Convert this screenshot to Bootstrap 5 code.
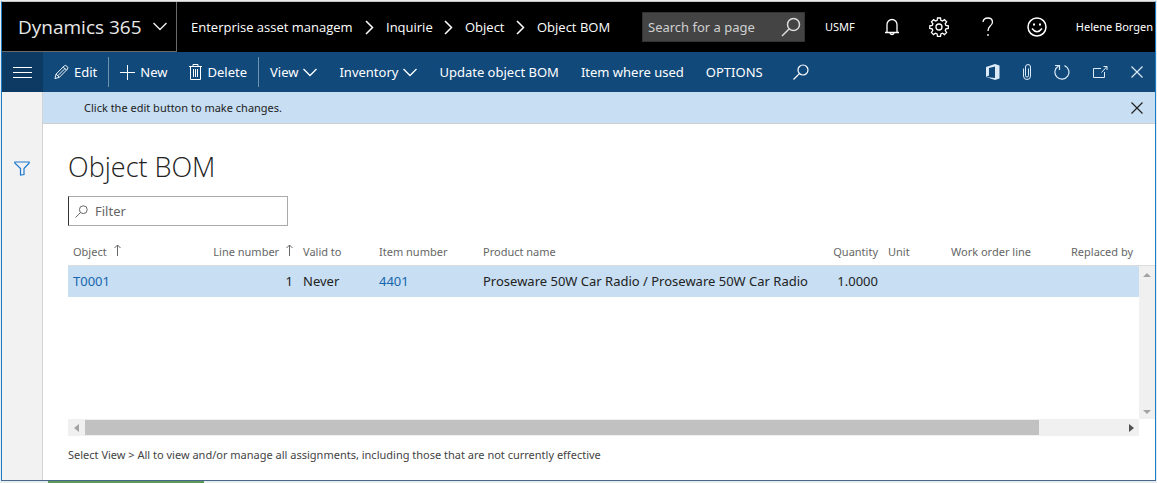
<!DOCTYPE html>
<html lang="en">
<head>
<meta charset="utf-8">
<meta name="viewport" content="width=device-width, initial-scale=1">
<title>Object BOM - Dynamics 365</title>
<link href="https://cdn.jsdelivr.net/npm/bootstrap@5.3.0/dist/css/bootstrap.min.css" rel="stylesheet">
<style>
  body { font-family: "Noto Sans", "Open Sans", sans-serif; font-size: 13px; line-height: 20px; color: #222; background: #e9ecef; }
  svg { display: block; fill: none; stroke: currentColor; flex: none; }
  .solid { stroke: none; fill: currentColor; }
  button { background: none; border: 0; padding: 0; color: inherit; }
  .app-window { border: 1px solid #1b7cc8; border-top-color: #c4c4c4; border-bottom-color: #47688a; margin: 1px 1px 0; background: #fff; }
  .behind { height: 2px; padding-left: 48px; }
  .behind-mark { width: 156px; background: #5d9a5a; }
  .top-bar { height: 50px; background: #000; color: #fff; }
  .brand-btn { width: 175px; padding-left: 16px; gap: 11px; font-size: 19px; border: 1px solid #6a6a6a; border-width: 0 1px 1px 0; color: #e8e8e8; font-family: "Open Sans", sans-serif; }
  .crumbs { padding-left: 14px; gap: 12px; font-family: "Open Sans", sans-serif; }
  .crumbs a, .plain-link { color: inherit; text-decoration: none; white-space: nowrap; }
  .crumb-l { width: 162px; } .crumb-m { width: 46px; } .crumb-s { width: 39px; } .crumb-e { width: 75px; }
  .page-search { width: 163px; height: 30px; background: #444; border: 1px solid #333; margin-left: 30px; padding: 0 3px 0 5px; color: #ddd; }
  .page-search input { background: none; border: 0; outline: 0; color: #fff; min-width: 0; padding: 0; }
  .page-search input::placeholder { color: #d0d0d0; opacity: 1; }
  .fine { font-size: 11px; }
  .tools { gap: 29px; padding-left: 20px; }
  .action-bar { height: 40px; background: #11497b; color: #fff; }
  .menu-btn { width: 41px; background: #0d3a63; }
  .divide { width: 1px; height: 30px; background: #6f92b0; }
  .bar-items button { display: flex; align-items: center; gap: 5px; padding: 0 11px; white-space: nowrap; }
  .bar-tools { gap: 23px; padding-right: 12px; color: #dcebf7; }
  .side-rail { width: 41px; background: #f2f2f2; border-right: 1px solid #d2d2d2; padding-top: 69px; color: #1e7bd0; }
  .notice { height: 32px; background: #c7def3; border-bottom: 1px solid #d0d0d0; padding: 0 12px 0 41px; }
  .work { padding: 23px 0 16px 25px; }
  .work h1 { font-family: "Open Sans", sans-serif; font-size: 27px; line-height: 40px; font-weight: 300; margin: 0 0 9px; }
  .filter-box { width: 220px; height: 30px; border: 1px solid #aaa; border-left-color: #333; padding: 0 6px; gap: 7px; color: #666; }
  .filter-box input { border: 0; outline: 0; padding: 0; min-width: 0; }
  .filter-box input::placeholder { color: #666; opacity: 1; }
  .grid-top { margin-top: 14px; }
  .bom { table-layout: fixed; width: 100%; min-width: 1000px; }
  .bom th { font-weight: 400; font-size: 11px; color: #666; padding: 0 5px; height: 25px; white-space: nowrap; }
  .bom td { background: #c7def3; border-top: 1px solid #dcdcdc; height: 32px; padding: 0 5px; white-space: nowrap; }
  .bom a { color: #1766ad; text-decoration: none; }
  .c-obj { width: 92px; } .c-line { width: 138px; } .c-valid { width: 76px; } .c-item { width: 104px; }
  .c-qty { width: 60px; } .c-unit { width: 63px; } .c-work { width: 120px; } .c-rep { width: 73px; }
  .v-track { width: 16px; margin-top: 25px; background: #f0f0f0; border-top: 1px solid #dcdcdc; padding: 7px 0 5px; color: #a3a3a3; }
  .h-track { height: 17px; margin-right: 16px; background: #f0f0f0; padding: 1px 5px 1px 6px; color: #a3a3a3; }
  .h-thumb { background: #c1c1c1; width: 90%; margin-left: 6px; }
  .dark-arrow { color: #505050; }
  .hint { margin: 10px 0 0; font-size: 11px; line-height: 18px; color: #444; }
</style>
</head>
<body>
<div class="d-flex flex-column vh-100">
<div class="app-window d-flex flex-column flex-grow-1">
  <header class="top-bar d-flex align-items-stretch">
    <button class="brand-btn d-flex align-items-center flex-shrink-0">Dynamics 365
      <svg width="14" height="9" viewBox="0 0 14 9" stroke-width="1.500"><path d="M.5 1L7 7.500 13.500 1"/></svg></button>
    <nav class="crumbs d-flex align-items-center flex-shrink-0" aria-label="Breadcrumb">
      <a href="#" class="crumb-l">Enterprise asset managem</a>
      <svg width="9" height="15" viewBox="0 0 9 15" stroke-width="1.500"><path d="M1 1l6.500 6.500L1 14"/></svg>
      <a href="#" class="crumb-m">Inquirie</a>
      <svg width="9" height="15" viewBox="0 0 9 15" stroke-width="1.500"><path d="M1 1l6.500 6.500L1 14"/></svg>
      <a href="#" class="crumb-s">Object</a>
      <svg width="9" height="15" viewBox="0 0 9 15" stroke-width="1.500"><path d="M1 1l6.500 6.500L1 14"/></svg>
      <a href="#" class="crumb-e">Object BOM</a>
    </nav>
    <div class="page-search d-flex align-items-center align-self-center flex-shrink-0">
      <input class="flex-grow-1" type="text" placeholder="Search for a page" aria-label="Search for a page">
      <svg width="20" height="20" viewBox="0 0 20 20" stroke-width="1.500"><circle cx="12.500" cy="7.500" r="6"/><path d="M8.300 11.700L1 19"/></svg>
    </div>
    <div class="tools d-flex align-items-center flex-grow-1">
      <span class="fine">USMF</span>
      <button aria-label="Notifications"><svg width="16" height="18" viewBox="0 0 16 18" stroke-width="1.300"><path d="M1 14.500h14M3 14.500V6.500a5 5 0 0 1 10 0v8M5.700 14.500q.3 2 2.300 2t2.300-2"/></svg></button>
      <button aria-label="Settings"><svg width="20" height="20" viewBox="0 0 20 20" stroke-width="1.300"><path d="M8.500 1h3l.4 2.400 1.600.7 2-1.400 2.100 2.100-1.400 2 .7 1.600 2.400.4v2.600l-2.400.5-.7 1.600 1.400 2-2.100 2.100-2-1.400-1.600.7-.4 2.400h-3l-.4-2.400-1.600-.7-2 1.400-2.100-2.100 1.400-2-.7-1.600L.8 11.400V8.800l2.400-.4.7-1.600-1.400-2 2.100-2.100 2 1.400 1.600-.7z"/><circle cx="10" cy="10" r="3"/></svg></button>
      <button aria-label="Help"><svg width="20" height="20" viewBox="0 0 20 20" stroke-width="1.300"><path d="M5 5q.5-4 4.900-4t4.600 4q0 2.300-2.500 4.200Q10 11 10 14M10 17v2"/></svg></button>
      <button aria-label="Feedback"><svg width="20" height="20" viewBox="0 0 20 20" stroke-width="1.500"><circle cx="10" cy="10" r="9"/><path d="M5 11.500q5 6.500 10 0"/><path d="M6 7.500h2M12 7.500h2" stroke-width="2"/></svg></button>
      <a href="#" class="plain-link fine">Helene Borgen</a>
    </div>
  </header>

  <div class="action-bar d-flex align-items-center">
    <button class="menu-btn h-100 d-flex align-items-center justify-content-center flex-shrink-0" aria-label="Menu"><svg width="19" height="12" viewBox="0 0 19 12"><path d="M0 1.500h19M0 6.500h19M0 11.500h19"/></svg></button>
    <div class="bar-items d-flex align-items-center flex-grow-1">
      <button><svg width="15" height="16" viewBox="0 0 16 16"><path d="M1 15l1.200-4.800L11 1.400q1.300-1 2.700.4 1.800 1.600.7 3L5.700 13.700zM2.200 10.200l3.500 3.500M9.800 2.600l3.600 3.600M4 12l8-8"/></svg>Edit</button>
      <span class="divide"></span>
      <button><svg width="15" height="15" viewBox="0 0 15 15"><path d="M7.500 0v15M0 7.500h15"/></svg>New</button>
      <button><svg width="13" height="16" viewBox="0 0 13 16"><path d="M0 2.500h13M4 2.500v-2h5v2M1.500 2.500v13h10v-13M4.500 5v8M6.500 5v8M8.500 5v8"/></svg>Delete</button>
      <span class="divide"></span>
      <button>View<svg width="14" height="9" viewBox="0 0 14 9" stroke-width="1.300"><path d="M.5 1L7 7.500 13.500 1"/></svg></button>
      <button>Inventory<svg width="14" height="9" viewBox="0 0 14 9" stroke-width="1.300"><path d="M.5 1L7 7.500 13.500 1"/></svg></button>
      <button>Update object BOM</button>
      <button>Item where used</button>
      <button>OPTIONS</button>
      <button class="ms-2" aria-label="Search"><svg width="16" height="16" viewBox="0 0 16 16" stroke-width="1.200"><circle cx="10" cy="6" r="5"/><path d="M6.400 9.600L.5 15.500"/></svg></button>
    </div>
    <div class="bar-tools d-flex align-items-center">
      <button aria-label="Open in Office"><svg class="solid" width="14" height="16" viewBox="0 0 14 16"><path d="M0 3l9-3 4.500 1.500v13L9 16l-9-3 9 1V2.500L3 4v7.500L0 13z"/></svg></button>
      <button aria-label="Attach"><svg width="8" height="16" viewBox="0 0 8 16"><path d="M5.500 4.500v7a1.500 1.500 0 0 1-3 0V3a2.400 2.400 0 0 1 5 0v9a3.400 3.400 0 0 1-7 0V4.500"/></svg></button>
      <button aria-label="Refresh"><svg width="16" height="16" viewBox="0 0 16 16" stroke-width="1.200"><path d="M10.500 1.600A7 7 0 1 1 4.500 2M1 1.500h4.500V6"/></svg></button>
      <button aria-label="Open in new window"><svg width="15" height="12" viewBox="0 0 15 12"><path d="M8 2.500H.5v9h11V6M8.500 6.500l5.500-6M10.500.5H14V4"/></svg></button>
      <button aria-label="Close"><svg width="12" height="12" viewBox="0 0 12 12" stroke-width="1.200"><path d="M.5.5l11 11M11.500.5l-11 11"/></svg></button>
    </div>
  </div>

  <div class="d-flex flex-grow-1">
    <aside class="side-rail flex-shrink-0 d-flex justify-content-center align-items-start">
      <button aria-label="Show filters"><svg width="16" height="15" viewBox="0 0 16 15" stroke-width="1.200"><path d="M.8 1h14.400v1L10 7.500v6L6.500 14V7.500L.8 2z"/></svg></button>
    </aside>
    <div class="flex-grow-1 d-flex flex-column overflow-hidden">
      <div class="notice fine d-flex align-items-center justify-content-between">
        <span>Click the edit button to make changes.</span>
        <button aria-label="Dismiss"><svg width="12" height="12" viewBox="0 0 12 12" stroke-width="1.200"><path d="M.5.5l11 11M11.500.5l-11 11"/></svg></button>
      </div>
      <main class="work d-flex flex-column flex-grow-1">
        <h1>Object BOM</h1>
        <div class="filter-box d-flex align-items-center">
          <svg width="13" height="13" viewBox="0 0 13 13"><circle cx="8.300" cy="4.700" r="3.900"/><path d="M5.500 7.500L.5 12.500"/></svg>
          <input class="flex-grow-1" type="text" placeholder="Filter" aria-label="Filter">
        </div>
        <div class="grid-top d-flex flex-grow-1">
          <div class="flex-grow-1 overflow-hidden">
            <table class="bom">
              <colgroup><col class="c-obj"><col class="c-line"><col class="c-valid"><col class="c-item"><col><col class="c-qty"><col class="c-unit"><col class="c-work"><col class="c-rep"></colgroup>
              <thead><tr>
                <th>Object <svg class="d-inline-block ms-1 align-baseline" width="7" height="12" viewBox="0 0 7 12"><path d="M3.500 12V1M.5 4l3-3 3 3"/></svg></th>
                <th class="text-end">Line number <svg class="d-inline-block ms-1 align-baseline" width="7" height="12" viewBox="0 0 7 12"><path d="M3.500 12V1M.5 4l3-3 3 3"/></svg></th>
                <th>Valid to</th><th>Item number</th><th>Product name</th><th class="text-end">Quantity</th><th>Unit</th><th>Work order line</th><th>Replaced by</th>
              </tr></thead>
              <tbody><tr>
                <td><a href="#">T0001</a></td><td class="text-end">1</td><td>Never</td><td><a href="#">4401</a></td>
                <td>Proseware 50W Car Radio / Proseware 50W Car Radio</td><td class="text-end">1.0000</td><td></td><td></td><td></td>
              </tr></tbody>
            </table>
          </div>
          <div class="v-track d-flex flex-column flex-shrink-0 align-items-center justify-content-between">
            <svg class="solid" width="8" height="4" viewBox="0 0 8 4"><path d="M0 4l4-4 4 4z"/></svg>
            <svg class="solid" width="8" height="4" viewBox="0 0 8 4"><path d="M0 0h8L4 4z"/></svg>
          </div>
        </div>
        <div class="h-track d-flex align-items-center">
          <svg class="solid" width="5" height="8" viewBox="0 0 5 8"><path d="M5 0v8L0 4z"/></svg>
          <div class="h-thumb h-100"></div>
          <svg class="solid dark-arrow ms-auto" width="5" height="8" viewBox="0 0 5 8"><path d="M0 0v8l5-4z"/></svg>
        </div>
        <p class="hint">Select View &gt; All to view and/or manage all assignments, including those that are not currently effective</p>
      </main>
    </div>
  </div>
</div>
<div class="behind d-flex"><div class="behind-mark"></div></div>
</div>
<script src="https://cdn.jsdelivr.net/npm/bootstrap@5.3.0/dist/js/bootstrap.bundle.min.js"></script>
</body>
</html>
